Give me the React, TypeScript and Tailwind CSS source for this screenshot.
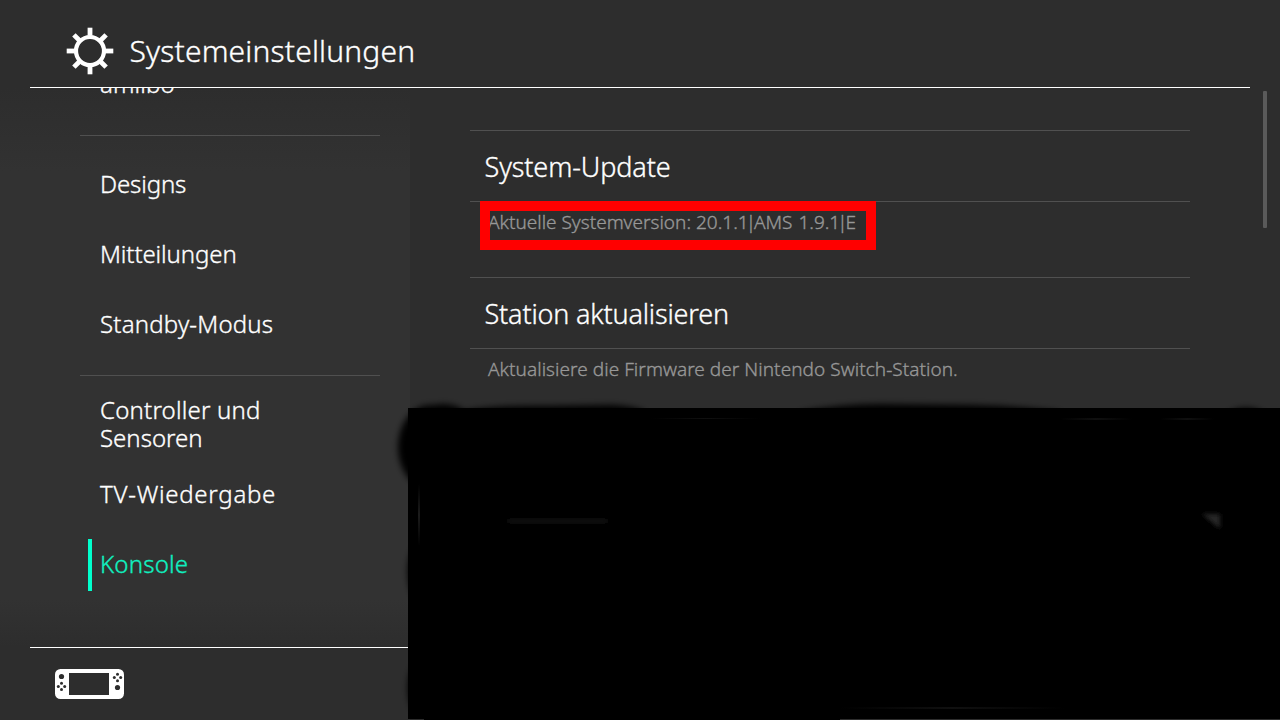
import React from 'react';

function GearIcon() {
  const teeth = [0, 45, 90, 135, 180, 225, 270, 315];
  return (
    <svg viewBox="-24 -24 48 48" className="size-12 shrink-0">
      <circle r="14" fill="none" stroke="#fff" strokeWidth="4.2" />
      {teeth.map((angle) => (
        <rect
          key={angle}
          x="-2.4"
          y={angle % 90 === 0 ? -23.3 : -22.8}
          width="4.8"
          height="8"
          fill="#fff"
          transform={`rotate(${angle})`}
        />
      ))}
    </svg>
  );
}

function ConsoleIcon() {
  return (
    <svg viewBox="0 0 69 30" className="h-[30px] w-[69px]">
      <rect width="69" height="30" rx="5.5" fill="#fff" />
      <g fill="#2d2d2d">
        <rect x="14" y="4" width="40" height="22" />
        <circle cx="6.5" cy="7.5" r="2.6" />
        <circle cx="6.5" cy="14.2" r="1.5" />
        <circle cx="6.5" cy="20.6" r="1.5" />
        <circle cx="3.3" cy="17.4" r="1.5" />
        <circle cx="9.7" cy="17.4" r="1.5" />
        <circle cx="62.5" cy="18.5" r="2.6" />
        <circle cx="62.5" cy="5.3" r="1.5" />
        <circle cx="62.5" cy="11.7" r="1.5" />
        <circle cx="59.3" cy="8.5" r="1.5" />
        <circle cx="65.7" cy="8.5" r="1.5" />
      </g>
    </svg>
  );
}

function NavItem({ children, className = '' }: { children: React.ReactNode; className?: string }) {
  return (
    <li className="flex h-[70px] items-center pb-0.5 pl-5 text-2xl leading-7 whitespace-nowrap">
      <span className={className}>{children}</span>
    </li>
  );
}

function Divider() {
  return <li className="my-[14.5px] h-px bg-[#505050]" />;
}

function Section({ title, note, titleClass, noteClass }: { title: string; note: React.ReactNode; titleClass: string; noteClass: string }) {
  return (
    <section className="h-[147px] whitespace-nowrap">
      <div className="flex h-[72px] items-center border-y border-[#505050] pt-0.5 pl-[14.5px] text-[27px] text-white">
        <span className={titleClass}>{title}</span>
      </div>
      <p className="pt-[6px] pl-[18px] text-[19px] leading-7 text-[#979797]">
        <span className={noteClass}>{note}</span>
      </p>
    </section>
  );
}

function Redaction() {
  return (
    <svg viewBox="0 0 1280 720" className="pointer-events-none absolute inset-0 h-[720px] w-[1280px]">
      <defs>
        <filter id="soft" x="-20%" y="-50%" width="140%" height="200%">
          <feGaussianBlur stdDeviation="3.2" />
        </filter>
        <filter id="faint" x="-50%" y="-200%" width="200%" height="500%">
          <feGaussianBlur stdDeviation="2" />
        </filter>
        <linearGradient id="streak">
          <stop offset="0" stopColor="#101010" stopOpacity="0" />
          <stop offset="0.5" stopColor="#101010" />
          <stop offset="1" stopColor="#101010" stopOpacity="0" />
        </linearGradient>
        <linearGradient id="rise" x1="0" y1="0" x2="0" y2="1">
          <stop offset="0" stopColor="#1c1c1c" stopOpacity="0" />
          <stop offset="0.5" stopColor="#1c1c1c" />
          <stop offset="1" stopColor="#1c1c1c" stopOpacity="0" />
        </linearGradient>
      </defs>
      <g filter="url(#soft)">
        <ellipse cx="430" cy="447" rx="32" ry="42" />
        <ellipse cx="443" cy="424" rx="28" ry="20" />
        <path d="M460 412 Q490 405 550 406 L610 405 Q635 406 645 412 V440 H460Z" />
        <path d="M800 412 Q840 404 880 404 L970 405 Q1020 406 1060 412 V440 H800Z" />
        <ellipse cx="1246" cy="422" rx="22" ry="14" />
        <ellipse cx="420" cy="572" rx="12" ry="28" />
        <ellipse cx="420" cy="688" rx="12" ry="26" />
      </g>
      <rect x="408" y="408" width="872" height="311" />
      <rect x="424" y="719" width="416" height="1" />
      <path d="M508 519h99v4h-99z" fill="#121212" filter="url(#faint)" />
      <path d="M1202 514h18v15z" fill="#262626" filter="url(#faint)" />
      <rect x="418" y="484" width="2" height="62" fill="url(#rise)" />
      <rect x="1060" y="418" width="72" height="2" fill="url(#streak)" />
      <rect x="1160" y="418" width="54" height="2" fill="url(#streak)" />
      <rect x="650" y="418" width="110" height="1" fill="url(#streak)" />
      <rect x="840" y="707" width="225" height="2" fill="url(#streak)" />
    </svg>
  );
}

export default function App() {
  return (
    <div className="relative flex h-[720px] w-[1280px] flex-col overflow-hidden bg-[#2d2d2d] font-['Noto_Sans','Open_Sans',sans-serif] font-light text-white [-webkit-text-stroke:0.35px]">
      <header className="mx-[30px] flex h-[88px] shrink-0 items-start border-b border-white pt-[27px] pl-9">
        <GearIcon />
        <h1 className="mt-px ml-[15.5px] text-[30px] leading-[46px] font-light tracking-[0.17px] whitespace-nowrap">Systemeinstellungen</h1>
      </header>

      <main className="flex h-[559px] shrink-0 overflow-hidden">
        <nav className="flex h-full w-[410px] flex-col overflow-hidden bg-linear-to-b from-[#2d2d2d] from-0% to-[#323232] to-15%">
          <ul className="-mt-[38px] ml-20 w-[300px] shrink-0">
            <NavItem className="tracking-[0.1px]">amiibo</NavItem>
            <Divider />
            <NavItem className="tracking-[-0.13px]">Designs</NavItem>
            <NavItem className="tracking-[-0.1px]">Mitteilungen</NavItem>
            <NavItem className="tracking-[0.2px]">Standby-Modus</NavItem>
            <Divider />
            <NavItem><span className="tracking-[0.2px]">Controller und</span><br />Sensoren</NavItem>
            <NavItem className="tracking-[0.73px]">TV-Wiedergabe</NavItem>
            <li className="flex h-[70px] items-center pl-2 text-2xl whitespace-nowrap">
              <span className="h-[52px] w-1 bg-[#00ffcc]" />
              <span className="mb-0.5 ml-2 tracking-[0.2px] text-[#10f0c0]">Konsole</span>
            </li>
          </ul>
          <div className="flex-1 bg-linear-to-b from-[#323232] to-[#2d2d2d]" />
        </nav>
        <div className="flex-1 pt-[42px] pl-[60px]">
          <div className="w-[720px]">
            <Section
              title="System-Update"
              note={<>Aktuelle Systemversion: 20.1.1<span className="mr-[-2px] ml-[-3px]">|</span>AMS <span className="ml-px">1.9.1</span><span className="mr-[-2px] ml-[-3px]">|</span>E</>}
              titleClass="tracking-[-0.1px]"
              noteClass=""
            />
            <Section
              title="Station aktualisieren"
              note="Aktualisiere die Firmware der Nintendo Switch-Station."
              titleClass="tracking-[-0.17px]"
              noteClass="tracking-[0.05px]"
            />
          </div>
        </div>
        <div className="mt-[3px] mr-[13px] h-[137px] w-1 rounded-[1px] bg-[#5a5a5a]" />
      </main>

      <footer className="mx-[30px] h-[73px] shrink-0 border-t border-white pt-[21px] pl-[25px]">
        <ConsoleIcon />
      </footer>

      <div className="absolute top-[201px] left-[480px] h-[49px] w-[396px] border-10 border-[#ff0000]" />
      <Redaction />
    </div>
  );
}
